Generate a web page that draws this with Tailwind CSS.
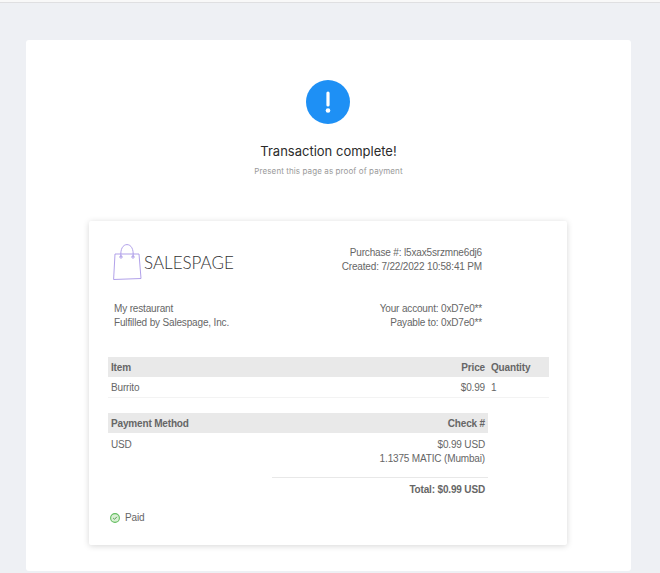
<!DOCTYPE html>
<html><head><meta charset="utf-8"><script src="https://cdn.jsdelivr.net/npm/@tailwindcss/browser@4"></script></head>
<body class="m-0 h-[573px] w-[660px] overflow-hidden bg-[#eef0f4]">
<div class="h-[3px] border-t-2 border-b border-t-[#f8f8f8] border-b-[#dfdfe1]"></div>
<main class="ml-[26px] mt-[37px] h-[531px] w-[605px] rounded-[3px] bg-white pt-[40px] text-[#666] font-['Liberation_Sans',sans-serif]">
  <div class="flex flex-col items-center">
    <svg class="ml-[-1px] h-[44px] w-[44px]" viewBox="0 0 44 44"><circle cx="22" cy="22" r="22" fill="#1e90f5"/><rect x="20.4" y="11.5" width="3.2" height="15" rx="1.6" fill="#fff"/><circle cx="22" cy="30.5" r="2.3" fill="#fff"/></svg>
    <h1 class="mt-[18px] h-[18px] text-[13px] leading-[18px] text-[#2b2b2b] font-['Inter',sans-serif]">Transaction complete!</h1>
    <p class="mt-[4px] h-[14px] text-[8px] leading-[14px] tracking-[0.1px] text-[#999] font-['Inter',sans-serif]">Present this page as proof of payment</p>
  </div>
  <section class="ml-[63px] mt-[43px] h-[324px] w-[478px] rounded-[2px] bg-white pl-[19px] pt-[23px] text-[10px] leading-[14px] tracking-[-0.16px] shadow-[0_1px_6px_rgba(0,0,0,0.16)]">
    <div class="flex h-[36px] w-[441px] items-start justify-between pl-[5px] pr-[67px]">
      <div class="flex">
        <svg class="h-[37px] w-[29px]" viewBox="0 0 29 37" fill="none" stroke="#a896e6" stroke-width="0.9"><path d="M2 10 L26 10 L28 34.5 L0.6 35.5 Z"/><path d="M8 13 C7 5 10 0.6 14 0.6 C18 0.6 21 5 20 13"/><circle cx="8" cy="13" r="1.2"/><circle cx="20" cy="13" r="1.2"/></svg>
        <span class="ml-[2px] mt-[8px] text-[17px] leading-[22px] tracking-normal text-[#333] font-light font-['Lato',sans-serif]">SALESPAGE</span>
      </div>
      <div class="pt-[2px] text-right"><p>Purchase #: l5xax5srzmne6dj6</p><p>Created: 7/22/2022 10:58:41 PM</p></div>
    </div>
    <div class="mt-[21px] flex h-[28px] w-[441px] justify-between pl-[6px] pr-[67px] pt-[1px]">
      <div><p>My restaurant</p><p>Fulfilled by Salespage, Inc.</p></div>
      <div class="text-right"><p>Your account: 0xD7e0**</p><p>Payable to: 0xD7e0**</p></div>
    </div>
    <div class="mt-[28px] w-[441px]">
      <div class="flex h-[20px] items-center bg-[#e9e9e9] pt-[2px] font-bold"><span class="ml-[3px] flex-1">Item</span><span>Price</span><span class="ml-[6px] w-[58px]">Quantity</span></div>
      <div class="flex h-[21px] items-center border-b border-[#f3f3f3] pt-[2px]"><span class="ml-[3px] flex-1">Burrito</span><span>$0.99</span><span class="ml-[6px] w-[58px]">1</span></div>
    </div>
    <div class="mt-[15px] w-[380px]">
      <div class="flex h-[20px] items-center justify-between bg-[#e9e9e9] px-[3px] pt-[2px] font-bold"><span>Payment Method</span><span>Check #</span></div>
      <div class="flex justify-between px-[3px] pt-[5px]"><span>USD</span><div class="text-right"><p>$0.99 USD</p><p>1.1375 MATIC (Mumbai)</p></div></div>
      <div class="ml-[164px] mt-[11px] border-t border-[#e8e8e8] pr-[3px] pt-[5px] text-right font-bold">Total: $0.99 USD</div>
    </div>
    <div class="ml-[2px] mt-[13px] flex items-center gap-[5px]">
      <svg class="h-[10px] w-[10px]" viewBox="0 0 10 10" fill="none"><circle cx="5" cy="5" r="4.4" fill="#d9f0d4" stroke="#62bd5f" stroke-width="1.1"/><path d="M3.2 5.1 L4.5 6.3 L6.9 3.8" stroke="#4a8f4a" stroke-width="0.9"/></svg>
      <span class="pt-[1px]">Paid</span>
    </div>
  </section>
</main>
</body></html>
